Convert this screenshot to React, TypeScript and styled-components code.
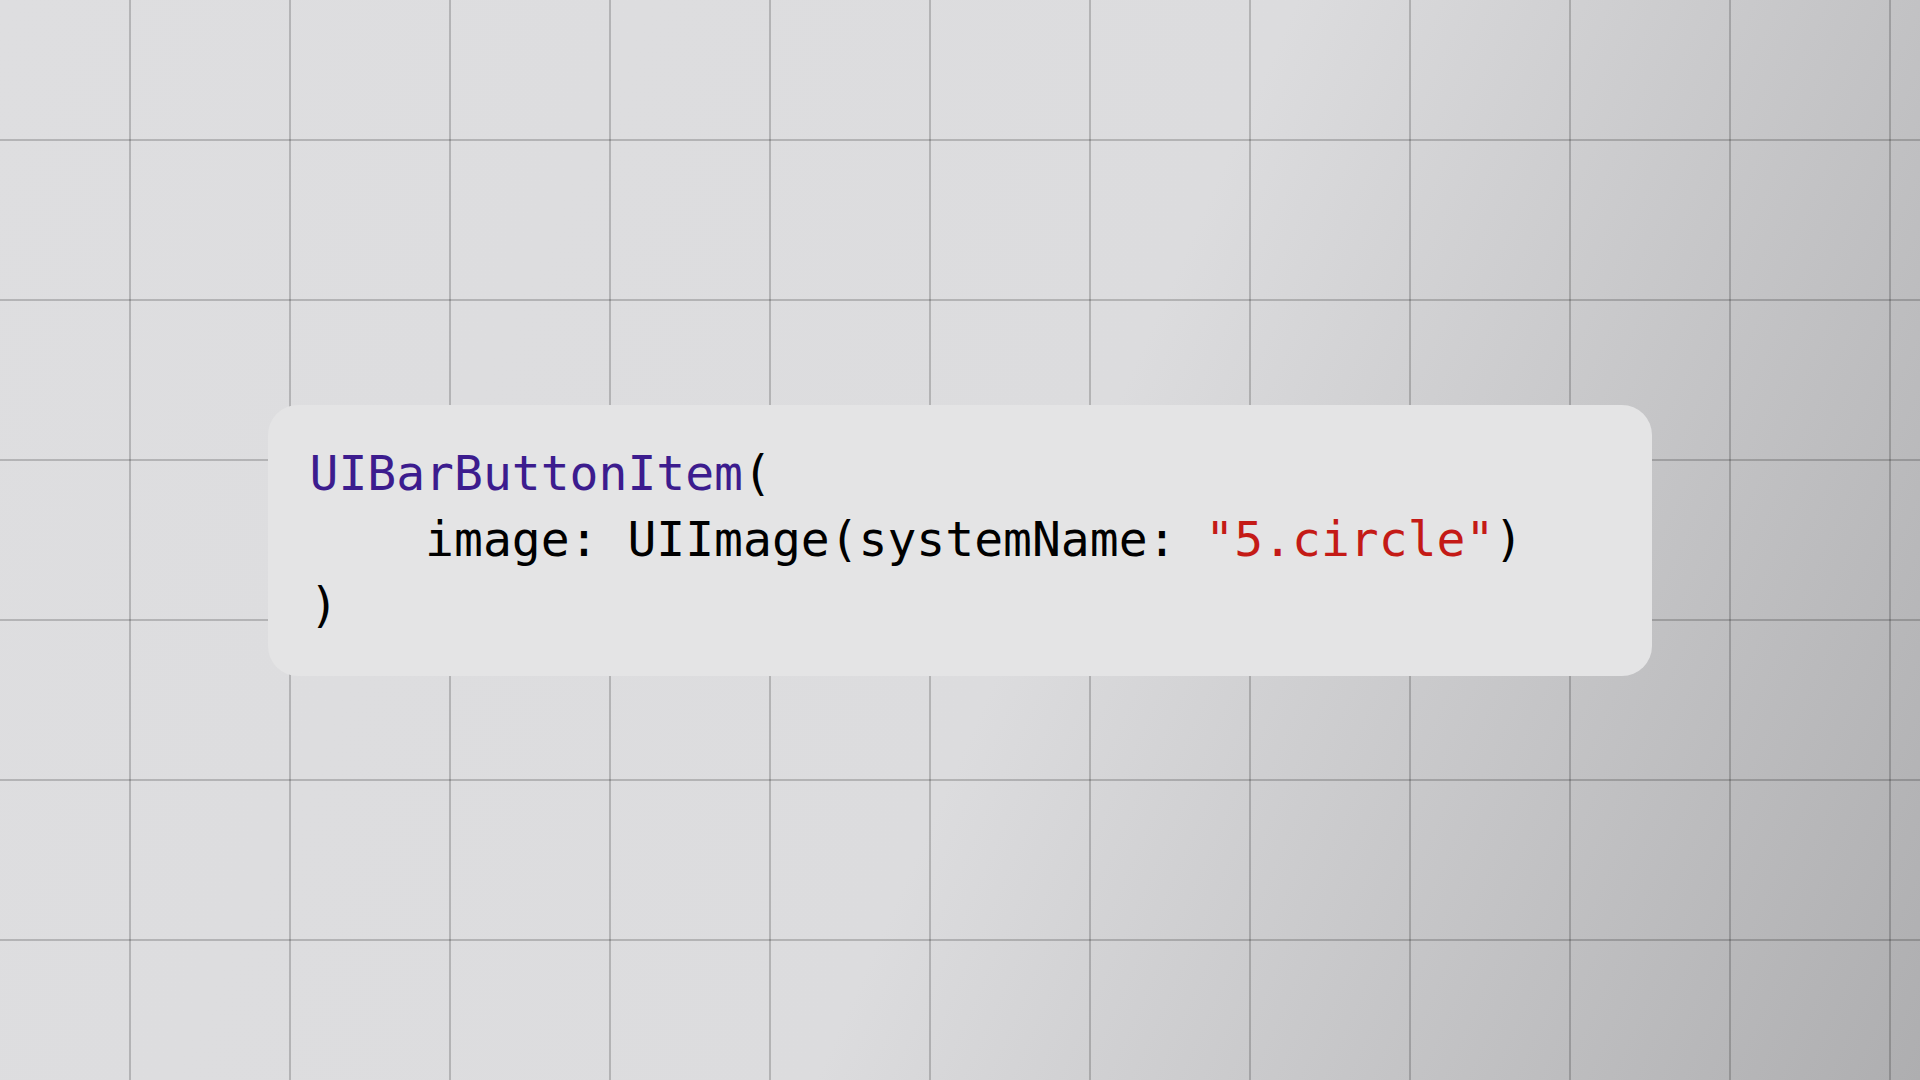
import React from "react";
import styled, { createGlobalStyle } from "styled-components";

const GlobalStyle = createGlobalStyle`
  html, body {
    margin: 0;
    padding: 0;
    width: 100%;
    height: 100%;
    overflow: hidden;
  }
  #root {
    width: 100%;
    height: 100%;
  }
`;

const Stage = styled.main`
  width: 100vw;
  height: 100vh;
  display: flex;
  align-items: center;
  justify-content: center;
  background-color: #dcdcde;
  background-image:
    linear-gradient(to right, rgba(0, 0, 0, 0.19) 0, rgba(0, 0, 0, 0.19) 2px, transparent 2px),
    linear-gradient(to bottom, rgba(0, 0, 0, 0.19) 0, rgba(0, 0, 0, 0.19) 2px, transparent 2px),
    linear-gradient(114deg, #dedee0 0%, #dcdcde 54%, #c4c4c6 78%, #aeaeb0 100%);
  background-size: 160px 160px, 160px 160px, 100% 100%;
  background-position: 129px 0, 0 139px, 0 0;
`;

const CodeCard = styled.section`
  width: 1384px;
  height: 271px;
  box-sizing: border-box;
  padding: 35.5px 42px 37px 41.5px;
  border-radius: 30px;
  background: #e4e4e5;
  display: flex;
  flex-direction: column;
`;

const CodeLine = styled.div<{ $indent?: number }>`
  font-family: "DejaVu Sans Mono", "Liberation Mono", monospace;
  font-size: 48px;
  line-height: 66px;
  height: 66px;
  white-space: pre;
  color: #000000;
  padding-left: ${(p) => (p.$indent ?? 0) * 28.9}px;
`;

const TypeName = styled.span`
  color: #3c1c8e;
`;

const StringLit = styled.span`
  color: #c41a16;
`;

export default function App() {
  return (
    <>
      <GlobalStyle />
      <Stage>
        <CodeCard>
          <CodeLine>
            <TypeName>UIBarButtonItem</TypeName>(
          </CodeLine>
          <CodeLine $indent={4}>
            image: UIImage(systemName: <StringLit>"5.circle"</StringLit>)
          </CodeLine>
          <CodeLine>)</CodeLine>
        </CodeCard>
      </Stage>
    </>
  );
}
